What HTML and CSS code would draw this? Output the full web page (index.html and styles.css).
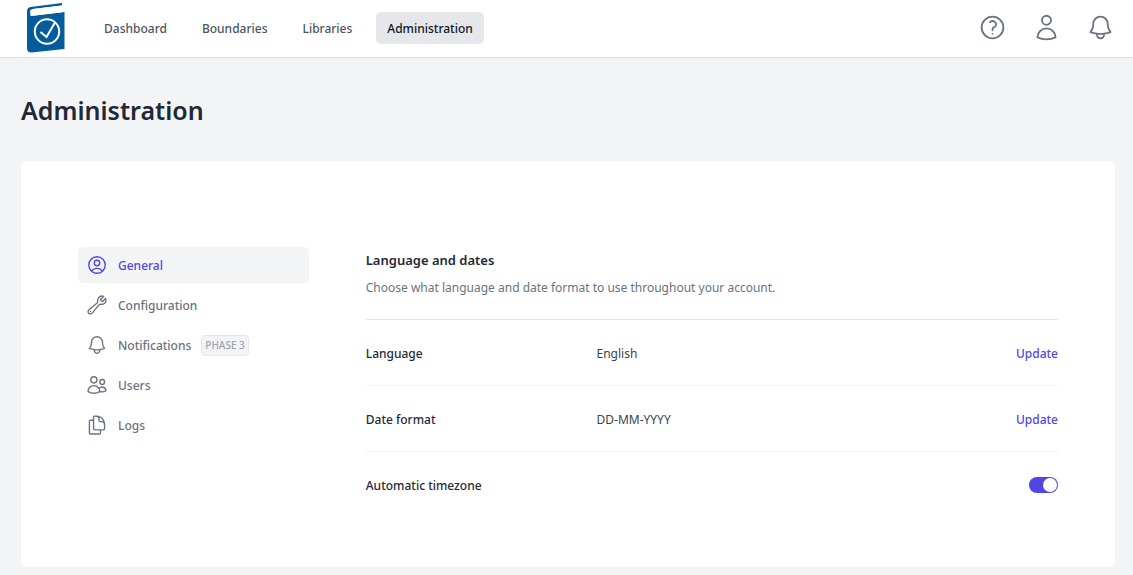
FILE: index.html
```html
<!DOCTYPE html>
<html lang="en">
<head>
<meta charset="utf-8">
<meta name="viewport" content="width=device-width, initial-scale=1">
<title>Administration</title>
<link rel="stylesheet" href="styles.css">
</head>
<body>
<header class="topbar">
  <a class="brand" href="#" aria-label="Home">
    <svg class="brand-logo" viewBox="0 0 38 50" aria-hidden="true">
      <path class="logo-book" d="M3.500 4 35 0v2.600L6.500 6Q4 6.500 4 8.500V13L37.500 9v37L4.500 49.500Q0 49.500 0 45V8.500Q0 4.500 3.500 4Z"/>
      <path class="logo-pages" d="M3 8.500Q3 6.500 5.500 6L35 2.600V9.300L3.500 13Z"/>
      <circle class="logo-ring" cx="20" cy="28.500" r="12.200"/>
      <path class="logo-check" d="m13.500 29 6 5 8.500-14.500"/>
    </svg>
  </a>
  <nav class="main-nav" aria-label="Main">
    <a class="main-link" href="#">Dashboard</a>
    <a class="main-link" href="#">Boundaries</a>
    <a class="main-link" href="#">Libraries</a>
    <a class="main-link main-link-active" href="#" aria-current="page">Administration</a>
  </nav>
  <div class="actions">
    <button class="icon-button" type="button" aria-label="Help">
      <svg class="icon icon-large" viewBox="0 0 24 24" aria-hidden="true"><path d="M9.879 7.519c1.171-1.025 3.071-1.025 4.242 0 1.172 1.025 1.172 2.687 0 3.712-.203.179-.43.326-.67.442-.745.361-1.450.999-1.450 1.827v.75M21 12a9 9 0 1 1-18 0 9 9 0 0 1 18 0Zm-9 5.250h.008v.008H12v-.008Z"/></svg>
    </button>
    <button class="icon-button" type="button" aria-label="Account">
      <svg class="icon icon-large" viewBox="0 0 24 24" aria-hidden="true"><path d="M15.750 6a3.750 3.750 0 1 1-7.500 0 3.750 3.750 0 0 1 7.500 0ZM4.501 20.118a7.500 7.500 0 0 1 14.998 0A17.933 17.933 0 0 1 12 21.750c-2.676 0-5.216-.584-7.499-1.632Z"/></svg>
    </button>
    <button class="icon-button" type="button" aria-label="Notifications">
      <svg class="icon icon-large" viewBox="0 0 24 24" aria-hidden="true"><path d="M14.857 17.082a23.848 23.848 0 0 0 5.454-1.310A8.967 8.967 0 0 1 18 9.750V9A6 6 0 0 0 6 9v.75a8.967 8.967 0 0 1-2.312 6.022c1.733.64 3.560 1.085 5.455 1.310m5.714 0a24.255 24.255 0 0 1-5.714 0m5.714 0a3 3 0 1 1-5.714 0"/></svg>
    </button>
  </div>
</header>

<main class="page">
  <h1 class="page-title">Administration</h1>
  <div class="card">
    <nav class="side-nav" aria-label="Administration sections">
      <a class="side-link side-link-active" href="#" aria-current="page">
        <svg class="icon" viewBox="0 0 24 24" aria-hidden="true"><path d="M17.982 18.725A7.488 7.488 0 0 0 12 15.750a7.488 7.488 0 0 0-5.982 2.975m11.963 0a9 9 0 1 0-11.963 0m11.963 0A8.966 8.966 0 0 1 12 21a8.966 8.966 0 0 1-5.982-2.275M15 9.750a3 3 0 1 1-6 0 3 3 0 0 1 6 0Z"/></svg>
        <span class="side-text">General</span>
      </a>
      <a class="side-link" href="#">
        <svg class="icon" viewBox="0 0 24 24" aria-hidden="true"><path d="M21.750 6.750a4.500 4.500 0 0 1-4.884 4.484c-1.076-.091-2.264.071-2.950.904l-7.152 8.684a2.548 2.548 0 1 1-3.586-3.586l8.684-7.152c.833-.686.995-1.874.904-2.950a4.500 4.500 0 0 1 6.336-4.486l-3.276 3.276a3.004 3.004 0 0 0 2.250 2.250l3.276-3.276c.256.565.398 1.192.398 1.852ZM4.867 19.125h.008v.008h-.008v-.008Z"/></svg>
        <span class="side-text">Configuration</span>
      </a>
      <a class="side-link" href="#">
        <svg class="icon" viewBox="0 0 24 24" aria-hidden="true"><path d="M14.857 17.082a23.848 23.848 0 0 0 5.454-1.310A8.967 8.967 0 0 1 18 9.750V9A6 6 0 0 0 6 9v.75a8.967 8.967 0 0 1-2.312 6.022c1.733.64 3.560 1.085 5.455 1.310m5.714 0a24.255 24.255 0 0 1-5.714 0m5.714 0a3 3 0 1 1-5.714 0"/></svg>
        <span class="side-text">Notifications</span>
        <span class="badge">PHASE 3</span>
      </a>
      <a class="side-link" href="#">
        <svg class="icon" viewBox="0 0 24 24" aria-hidden="true"><path d="M15 19.128a9.380 9.380 0 0 0 2.625.372 9.337 9.337 0 0 0 4.121-.952 4.125 4.125 0 0 0-7.533-2.493M15 19.128v-.003c0-1.113-.285-2.160-.786-3.070M15 19.128v.106A12.318 12.318 0 0 1 8.624 21c-2.331 0-4.512-.645-6.374-1.766l-.001-.109a6.375 6.375 0 0 1 11.964-3.070M12 6.375a3.375 3.375 0 1 1-6.750 0 3.375 3.375 0 0 1 6.750 0Zm8.250 2.250a2.625 2.625 0 1 1-5.250 0 2.625 2.625 0 0 1 5.250 0Z"/></svg>
        <span class="side-text">Users</span>
      </a>
      <a class="side-link" href="#">
        <svg class="icon" viewBox="0 0 24 24" aria-hidden="true"><path d="M15.750 17.250v3.375c0 .621-.504 1.125-1.125 1.125h-9.750a1.125 1.125 0 0 1-1.125-1.125V7.875c0-.621.504-1.125 1.125-1.125H6.750a9.060 9.060 0 0 1 1.500.124m7.500 10.376h3.375c.621 0 1.125-.504 1.125-1.125V11.250c0-4.460-3.243-8.161-7.500-8.876a9.060 9.060 0 0 0-1.500-.124H9.375c-.621 0-1.125.504-1.125 1.125v3.500m7.500 10.375H9.375a1.125 1.125 0 0 1-1.125-1.125v-9.250m12 6.625v-1.875a3.375 3.375 0 0 0-3.375-3.375h-1.500a1.125 1.125 0 0 1-1.125-1.125v-1.500a3.375 3.375 0 0 0-3.375-3.375H9.750"/></svg>
        <span class="side-text">Logs</span>
      </a>
    </nav>

    <section class="settings" aria-labelledby="settings-title">
      <h2 class="settings-title" id="settings-title">Language and dates</h2>
      <p class="settings-intro">Choose what language and date format to use throughout your account.</p>
      <div class="rows">
        <div class="row">
          <span class="row-label">Language</span>
          <span class="row-value">English</span>
          <button class="update" type="button">Update</button>
        </div>
        <div class="row">
          <span class="row-label">Date format</span>
          <span class="row-value">DD-MM-YYYY</span>
          <button class="update" type="button">Update</button>
        </div>
        <div class="row">
          <label class="row-label" for="auto-timezone">Automatic timezone</label>
          <input class="switch" id="auto-timezone" type="checkbox" role="switch" checked>
        </div>
      </div>
    </section>
  </div>
</main>
</body>
</html>
```
FILE: styles.css
```css
* {
  box-sizing: border-box;
}

body {
  margin: 0;
  background: #f3f4f6;
  color: #1f2937;
  font-family: "Segoe UI", "Noto Sans", "Open Sans", sans-serif;
  font-size: 12px;
  line-height: 18px;
}

a {
  color: inherit;
  text-decoration: none;
}

button {
  padding: 0;
  border: 0;
  background: none;
  font: inherit;
  cursor: pointer;
}

.topbar {
  display: flex;
  align-items: center;
  height: 58px;
  padding: 0 18px 2px 27px;
  background: #fff;
  border-bottom: 1px solid #d9dbdd;
}

.brand-logo {
  display: block;
  width: 38px;
  height: 50px;
}

.logo-book {
  fill: #045c9c;
}

.logo-pages {
  fill: #fff;
}

.logo-ring,
.logo-check {
  fill: none;
  stroke: #fff;
  stroke-width: 2;
}

.main-nav {
  display: flex;
  gap: 13px;
  margin-left: 28px;
}

.main-link {
  padding: 8px 11px 6px;
  border-radius: 5px;
  color: #4b5563;
  font-weight: 500;
}

.main-link-active {
  background: #e5e7eb;
  color: #111827;
}

.actions {
  display: flex;
  gap: 25px;
  margin-left: auto;
}

.icon-button {
  display: flex;
  color: #6b7280;
}

.icon {
  flex: none;
  width: 22px;
  height: 22px;
  fill: none;
  stroke: currentColor;
  stroke-width: 1.5;
  stroke-linecap: round;
  stroke-linejoin: round;
}

.icon-large {
  width: 29px;
  height: 29px;
}

.page {
  padding: 34px 18px 8px 21px;
}

.page-title {
  margin: 0 0 33px;
  font-size: 25px;
  line-height: 36px;
  font-weight: 600;
}

.card {
  display: grid;
  grid-template-columns: 1fr 3fr;
  gap: 57px;
  padding: 86px 57px 49px;
  border-radius: 7px;
  background: #fff;
}

.side-nav {
  display: flex;
  flex-direction: column;
  gap: 4px;
}

.side-link {
  display: flex;
  align-items: center;
  gap: 10px;
  height: 36px;
  padding: 0 8px;
  border-radius: 5px;
  color: #6b7280;
  font-weight: 500;
}

.side-text {
  padding-top: 2px;
}

.side-link-active {
  background: #f3f4f6;
  color: #4f46e5;
}

.badge {
  padding: 0 3px 1px;
  border: 1px solid #e5e7eb;
  border-radius: 4px;
  background: #f3f4f6;
  color: #9ca3af;
  font-size: 10px;
}

.settings-title {
  margin: 4px 0 10px;
  font-size: 13px;
  line-height: 18px;
  font-weight: 600;
}

.settings-intro {
  margin: 0;
  color: #6b7280;
}

.rows {
  margin-top: 22px;
  border-top: 1px solid #e5e7eb;
}

.row {
  display: grid;
  grid-template-columns: 1fr 1fr 1fr;
  align-items: center;
  height: 66px;
  border-bottom: 1px solid #f3f4f6;
}

.row:last-child {
  border-bottom-color: transparent;
}

.row-label,
.row-value,
.update {
  padding-top: 2px;
}

.row-label {
  font-weight: 500;
}

.row-value {
  color: #374151;
}

.update {
  justify-self: end;
  color: #4f46e5;
  font-weight: 500;
}

.switch {
  grid-column: 3;
  justify-self: end;
  display: flex;
  justify-content: flex-end;
  width: 29px;
  height: 16px;
  margin: 0;
  padding: 1px;
  border-radius: 8px;
  background: #4f46e5;
  appearance: none;
  cursor: pointer;
}

.switch::before {
  content: "";
  width: 14px;
  height: 14px;
  border-radius: 50%;
  background: #fff;
}

.switch:not(:checked) {
  justify-content: flex-start;
  background: #d1d5db;
}
```
